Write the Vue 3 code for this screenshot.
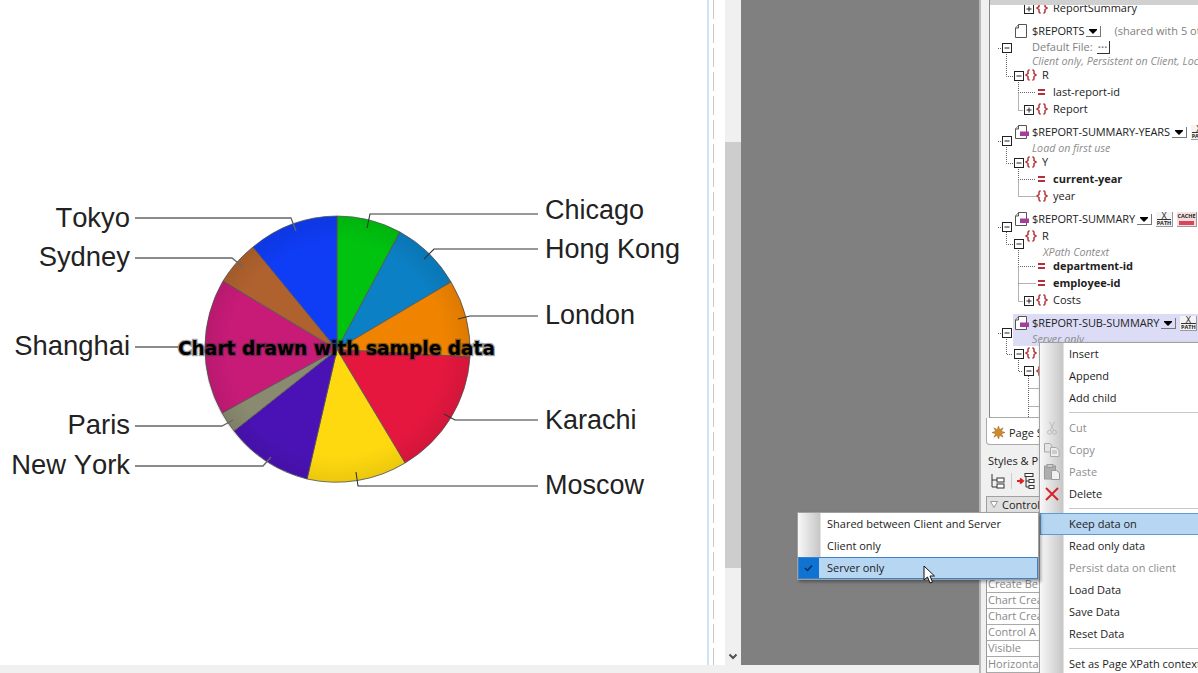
<script setup>
const slices = [
  { d: 'M337 349.5 L337 216 A133 133 0 0 1 400 232 Z', fill: '#00c30f' },
  { d: 'M337 349.5 L400 232 A133 133 0 0 1 451 282 Z', fill: '#0b80c4' },
  { d: 'M337 349.5 L451 282 A133 133 0 0 1 470 357 Z', fill: '#f08400' },
  { d: 'M337 349.5 L470 357 A133 133 0 0 1 405 463 Z', fill: '#e5173f' },
  { d: 'M337 349.5 L405 463 A133 133 0 0 1 307 479 Z', fill: '#ffd90f' },
  { d: 'M337 349.5 L307 479 A133 133 0 0 1 234 431 Z', fill: '#4a12b5' },
  { d: 'M337 349.5 L234 431 A133 133 0 0 1 222 413 Z', fill: '#8a8a70' },
  { d: 'M337 349.5 L222 413 A133 133 0 0 1 223 281 Z', fill: '#c81b78' },
  { d: 'M337 349.5 L223 281 A133 133 0 0 1 253 247 Z', fill: '#b0622e' },
  { d: 'M337 349.5 L253 247 A133 133 0 0 1 337 216 Z', fill: '#0f3cf5' },
]

const leftLabels = [
  { text: 'Tokyo', y: 227, line: '135,218 291,218 296,231' },
  { text: 'Sydney', y: 266, line: '135,258 232,258 243,267' },
  { text: 'Shanghai', y: 355, line: '135,347 178,347' },
  { text: 'Paris', y: 434, line: '135,426 222,426 233,420' },
  { text: 'New York', y: 474, line: '135,466 263,466 271,457' },
]

const rightLabels = [
  { text: 'Chicago', y: 219, line: '538,214 370,214 367,228' },
  { text: 'Hong Kong', y: 258, line: '538,249 434,249 424,259' },
  { text: 'London', y: 324, line: '538,316 470,316 458,319' },
  { text: 'Karachi', y: 429, line: '538,420 455,420 444,414' },
  { text: 'Moscow', y: 494, line: '538,486 358,486 356,472' },
]

// y is the row's centre line, x its text start; both from the tree box corner
const rowHeight = 14
const treeData = [
  { y: 8, x: 63, text: 'ReportSummary', icon: 'brace' },
  { y: 31, x: 42, text: '$REPORTS', icon: 'file', drop: true, note: '(shared with 5 ot' },
  { y: 47, x: 42, text: 'Default File:', kind: 'gray', dots: true },
  { y: 61, x: 42, text: 'Client only, Persistent on Client, Loc', kind: 'hint' },
  { y: 75, x: 52, text: 'R', icon: 'brace' },
  { y: 92, x: 63, text: 'last-report-id', icon: 'eq' },
  { y: 109, x: 63, text: 'Report', icon: 'brace' },
  { y: 132, x: 42, text: '$REPORT-SUMMARY-YEARS', icon: 'data', drop: true, badges: ['X'] },
  { y: 148, x: 42, text: 'Load on first use', kind: 'hint' },
  { y: 162, x: 52, text: 'Y', icon: 'brace' },
  { y: 179, x: 63, text: 'current-year', icon: 'eq', kind: 'bold' },
  { y: 196, x: 63, text: 'year', icon: 'brace' },
  { y: 219, x: 42, text: '$REPORT-SUMMARY', icon: 'data', drop: true, badges: ['X', 'C'] },
  { y: 236, x: 52, text: 'R', icon: 'brace' },
  { y: 252, x: 53, text: 'XPath Context', kind: 'hint' },
  { y: 266, x: 63, text: 'department-id', icon: 'eq', kind: 'bold' },
  { y: 283, x: 63, text: 'employee-id', icon: 'eq', kind: 'bold' },
  { y: 300, x: 63, text: 'Costs', icon: 'brace' },
  { y: 323, x: 42, text: '$REPORT-SUB-SUMMARY', icon: 'data', drop: true, badges: ['X'] },
  { y: 339, x: 42, text: 'Server only', kind: 'hint' },
  { y: 353, x: 52, text: '', icon: 'brace' },
  { y: 371, x: 63, text: '', icon: 'brace' },
]
const treeRows = treeData.map((row, i) => ({
  ...row,
  gap: i === 0 ? row.y - rowHeight / 2 : row.y - treeData[i - 1].y - rowHeight,
}))

const expanders = [
  { x: 38.5, y: 9, plus: true }, { x: 16.5, y: 48 }, { x: 28, y: 76 }, { x: 38.5, y: 110, plus: true },
  { x: 16.5, y: 141 }, { x: 28, y: 163 }, { x: 16.5, y: 227 }, { x: 28, y: 244 },
  { x: 38.5, y: 301, plus: true }, { x: 16.5, y: 333 }, { x: 28, y: 354 }, { x: 38.5, y: 371 },
]

const treeLines = [
  'M16.5 52 V76.5 H23', 'M28.5 80 V92.5 H46 M28.5 92.5 V110.5 H33', 'M11 48.5 H8',
  'M16.5 145 V163.5 H23', 'M28.5 167 V179.5 H46 M28.5 179.5 V196.5 H46', 'M11 141.5 H8',
  'M16.5 232 V244.5 H23', 'M28.5 248 V266.5 H46 M28.5 266.5 V283.5 H46 M28.5 283.5 V301.5 H33', 'M11 227.5 H8',
  'M11 333.5 H8', 'M16.5 337 V354.5 H23', 'M28.5 358 V371.5 H33', 'M38.5 376 V418', 'M38.5 388.5 H50 M38.5 406.5 H50',
]

const menuItems = [
  { label: 'Insert' }, { label: 'Append' }, { label: 'Add child' }, { sep: true },
  { label: 'Cut', off: true, icon: 'cut' }, { label: 'Copy', off: true, icon: 'copy' },
  { label: 'Paste', off: true, icon: 'paste' }, { label: 'Delete', icon: 'delete' }, { sep: true },
  { label: 'Keep data on', on: true }, { label: 'Read only data' },
  { label: 'Persist data on client', off: true }, { label: 'Load Data' },
  { label: 'Save Data' }, { label: 'Reset Data' }, { sep: true },
  { label: 'Set as Page XPath context' },
]

const subItems = [
  { label: 'Shared between Client and Server' },
  { label: 'Client only' },
  { label: 'Server only', on: true },
]

const propRows = ['Create Be', 'Chart Crea', 'Chart Crea', 'Control A', 'Visible', 'Horizonta']
</script>

<template>
  <div class="screen">
    <div class="main">
      <section class="design">
        <svg class="chart" width="707" height="665" viewBox="0 0 707 665">
          <defs>
            <radialGradient id="shade" gradientUnits="userSpaceOnUse" cx="337" cy="349.5" r="133">
              <stop offset="0.8" stop-color="#000" stop-opacity="0" />
              <stop offset="1" stop-color="#000" stop-opacity="0.08" />
            </radialGradient>
          </defs>
          <path v-for="s in slices" :key="s.fill" :d="s.d" :fill="s.fill" stroke="#555" stroke-width="0.8" />
          <circle cx="337" cy="349.5" r="133" fill="url(#shade)" />
          <g v-for="l in leftLabels" :key="l.text">
            <polyline :points="l.line" fill="none" stroke="#666" stroke-width="1.3" />
            <text class="city left" x="130" :y="l.y" text-anchor="end">{{ l.text }}</text>
          </g>
          <g v-for="l in rightLabels" :key="l.text">
            <polyline :points="l.line" fill="none" stroke="#333" stroke-width="1.1" />
            <text class="city" x="545" :y="l.y">{{ l.text }}</text>
          </g>
          <text class="chart-note" x="336.5" y="355" text-anchor="middle">Chart drawn with sample data</text>
        </svg>
        <div class="page-edge"></div>
      </section>

      <div class="scrollbar">
        <div class="scroll-thumb"></div>
        <svg class="scroll-arrow" width="10" height="8" viewBox="0 0 10 8">
          <path d="M1.5 1.5 L5 5 L8.5 1.5" fill="none" stroke="#505050" stroke-width="2" />
        </svg>
      </div>

      <div class="workspace"></div>
    </div>

    <aside class="panel">
      <div class="tree">
        <div class="tree-selection"></div>
        <svg class="tree-lines" width="210" height="418" viewBox="0 0 210 418">
          <path v-for="l in treeLines" :key="l" :d="l" fill="none" stroke="#666" stroke-dasharray="1 1" />
        </svg>
        <div
          v-for="(row, i) in treeRows"
          :key="i"
          class="row"
          :class="row.kind"
          :style="{ marginTop: row.gap + 'px', paddingLeft: row.x + 'px' }"
        >
          <span v-if="row.icon" class="row-icon" :style="{ left: row.x - 17 + 'px' }">
            <svg v-if="row.icon === 'brace'" width="12" height="13" viewBox="0 0 12 13">
              <path d="M4.5 1 L3 2.5 V5 L1 6.5 L3 8 V10.5 L4.5 12 M7.5 1 L9 2.5 V5 L11 6.5 L9 8 V10.5 L7.5 12" fill="none" stroke="#b5373a" stroke-width="1.5" />
            </svg>
            <svg v-else-if="row.icon === 'eq'" class="eq" width="9" height="9" viewBox="0 0 9 9">
              <path d="M1 2.5 H8 M1 6.5 H8" stroke="#b92d3a" stroke-width="2" />
            </svg>
            <svg v-else width="14" height="14" viewBox="0 0 14 14">
              <path d="M3.5 .5 H11.5 V13.5 H.5 V4 Z" fill="#fff" stroke="#555" />
              <path d="M3.5 .5 V4 H.5" fill="#ddd" stroke="#555" />
              <rect v-if="row.icon === 'data'" x="5" y="6.5" width="9" height="4.5" fill="#a63c9c" />
            </svg>
          </span>
          <span class="row-text" :class="{ caps: row.drop }">{{ row.text }}</span>
          <span v-if="row.drop" class="drop"></span>
          <span v-if="row.note" class="note">{{ row.note }}</span>
          <span v-if="row.dots" class="dots">...</span>
          <template v-for="b in row.badges" :key="b">
            <span v-if="b === 'X'" class="badge"><b>X</b><i>PATH</i></span>
            <span v-else class="badge cache"><i>CACHE</i><u></u></span>
          </template>
        </div>
        <svg class="expanders" width="210" height="418" viewBox="0 0 210 418">
          <g v-for="e in expanders" :key="e.x + '-' + e.y" :transform="`translate(${Math.floor(e.x) - 4 + 0.5} ${e.y - 5 + 0.5})`">
            <rect x="0" y="0" width="9" height="9" fill="#fff" stroke="#222" />
            <path d="M2 4.5 H7" stroke="#222" />
            <path v-if="e.plus" d="M4.5 2 V7" stroke="#222" />
          </g>
        </svg>
        <div class="tree-top"></div>
      </div>

      <div class="tab">
        <svg width="13" height="13" viewBox="0 0 14 14">
          <path d="M7 0 L8.3 4 L12 2 L10 5.7 L14 7 L10 8.3 L12 12 L8.3 10 L7 14 L5.7 10 L2 12 L4 8.3 L0 7 L4 5.7 L2 2 L5.7 4 Z" fill="#d08a2a" stroke="#8a5a18" stroke-width="0.5" />
        </svg>
        <span>Page S</span>
      </div>
      <div class="styles-title">Styles &amp; P</div>
      <div class="toolbar">
        <svg width="16" height="16" viewBox="0 0 16 16">
          <path d="M2 1 V14 H7 M2 7 H7" fill="none" stroke="#333" />
          <rect x="7" y="5" width="7" height="4" fill="#fff" stroke="#333" />
          <rect x="7" y="11" width="7" height="4" fill="#fff" stroke="#333" />
        </svg>
        <i class="tool-sep"></i>
        <svg width="18" height="16" viewBox="0 0 18 16">
          <path d="M0 8 H5 M3 5.5 L6 8 L3 10.5" fill="none" stroke="#d22" stroke-width="2" />
          <path d="M9 2 V14 M9 8 H12 M9 14 H12" fill="none" stroke="#333" />
          <rect x="8" y="0.5" width="8" height="3" fill="#fff" stroke="#333" />
          <rect x="12" y="6.5" width="5" height="3" fill="#fff" stroke="#333" />
          <rect x="12" y="12.5" width="5" height="3" fill="#fff" stroke="#333" />
        </svg>
      </div>
      <div class="group-head">
        <svg width="8" height="7" viewBox="0 0 8 7">
          <path d="M.5 .5 H7.5 L4 6.5 Z" fill="#fff" stroke="#999" />
        </svg>
        <span>Control</span>
      </div>
      <div class="props">
        <div v-for="(p, i) in propRows" :key="i" class="prop">{{ p }}</div>
      </div>
    </aside>

    <div class="menu">
      <template v-for="(item, i) in menuItems" :key="i">
        <div v-if="item.sep" class="menu-sep"></div>
        <div v-else class="menu-item" :class="{ off: item.off, on: item.on }">
          <span class="menu-gutter">
            <svg v-if="item.icon === 'cut'" width="10" height="15" viewBox="0 0 12 16">
              <path d="M3 0 L8 10 M9 0 L4 10" stroke="#b4b4b4" fill="none" />
              <circle cx="3" cy="12.5" r="2.4" fill="none" stroke="#b4b4b4" />
              <circle cx="9" cy="12.5" r="2.4" fill="none" stroke="#b4b4b4" />
            </svg>
            <svg v-else-if="item.icon === 'copy'" width="16" height="14" viewBox="0 0 16 14">
              <path d="M.5 .5 H6 L8 3 V9 H.5 Z" fill="#e4e4e4" stroke="#aaa" />
              <path d="M6.5 4.5 H12 L15 7 V13.5 H6.5 Z" fill="#eee" stroke="#aaa" />
              <path d="M8 8 H13 M8 10 H13" stroke="#aaa" />
            </svg>
            <svg v-else-if="item.icon === 'paste'" width="16" height="16" viewBox="0 0 16 16">
              <rect x=".5" y="2" width="11" height="13" fill="#aeaeae" stroke="#999" />
              <rect x="3" y=".5" width="6" height="3" fill="#ccc" stroke="#999" />
              <path d="M7.5 6.5 H12.5 L15.5 9 V15.5 H7.5 Z" fill="#f0f0f0" stroke="#999" />
            </svg>
            <svg v-else-if="item.icon === 'delete'" width="14" height="14" viewBox="0 0 14 14">
              <path d="M1 1 L13 13 M13 1 L1 13" stroke="#d8242c" stroke-width="2" />
            </svg>
          </span>
          <span class="menu-label">{{ item.label }}</span>
        </div>
      </template>
    </div>

    <div class="submenu">
      <div v-for="item in subItems" :key="item.label" class="sub-item" :class="{ on: item.on }">
        <span class="sub-gutter">
          <svg v-if="item.on" width="9" height="8" viewBox="0 0 9 8">
            <path d="M1 4 L3.5 6.5 L8 1.5" fill="none" stroke="#0b2a55" stroke-width="1.5" />
          </svg>
        </span>
        <span class="menu-label">{{ item.label }}</span>
      </div>
    </div>

    <svg class="cursor" width="14" height="20" viewBox="0 0 14 20">
      <path d="M1 1 V15 L4.5 12 L7 18 L9.5 17 L7 11 H11.5 Z" fill="#fff" stroke="#111" />
    </svg>
  </div>
</template>

<style scoped>
.screen {
  position: relative;
  width: 1198px;
  height: 673px;
  overflow: hidden;
  display: flex;
  background: #f0f0f0;
  font-family: "Open Sans", "Noto Sans", sans-serif;
  font-size: 11px;
  color: #222;
}

.main {
  display: flex;
  width: 979px;
  height: 665px;
  flex: none;
}

.design {
  position: relative;
  width: 725px;
  background: #fff;
  flex: none;
}

.chart {
  display: block;
}

.city {
  font-family: "Liberation Sans", Arial, sans-serif;
  font-size: 27px;
  font-kerning: none;
  fill: #222;
}

.city.left {
  font-size: 27.4px;
}

.chart-note {
  font-family: "DejaVu Sans", sans-serif;
  font-size: 18.6px;
  font-weight: 700;
  fill: #000;
  paint-order: stroke;
  stroke: rgba(40, 40, 40, 0.45);
  stroke-width: 2.5px;
}

.page-edge {
  position: absolute;
  left: 707px;
  top: 0;
  bottom: 0;
  width: 5px;
  border-left: 2px solid #cfe2f6;
  background: repeating-linear-gradient(to bottom, #c8c8c8 0 19px, #fff 19px 24px) no-repeat right / 1px 100%;
}

.scrollbar {
  position: relative;
  width: 16px;
  flex: none;
  background: #f0f0f0;
  padding-top: 142px;
}

.scroll-thumb {
  height: 426px;
  background: #cdcdcd;
}

.scroll-arrow {
  position: absolute;
  left: 3px;
  bottom: 4px;
}

.workspace {
  flex: 1;
  background: #808080;
}

.panel {
  flex: 1;
  min-width: 0;
  padding-left: 5px;
  border-left: 2px solid #b8b8b8;
  overflow: hidden;
  background: #f0f0f0;
}

.tree {
  position: relative;
  width: 210px;
  height: 417px;
  margin-left: 3px;
  background: #fff;
  border-left: 1px solid #888;
  border-bottom: 1px solid #aaa;
  overflow: hidden;
}

.tree-top {
  position: absolute;
  left: -1px;
  right: 0;
  top: 0;
  height: 5px;
  background: #d0d0d0;
}

.tree-selection {
  position: absolute;
  left: 23px;
  right: 0;
  top: 314px;
  height: 32px;
  background: #dcdcf6;
}

.tree-lines,
.expanders {
  position: absolute;
  left: 0;
  top: 0;
  pointer-events: none;
}

.row {
  position: relative;
  display: flex;
  align-items: center;
  height: 14px;
  white-space: nowrap;
  line-height: 14px;
}

.row.gray {
  color: #808080;
}

.row.hint {
  color: #8c8c8c;
  font-style: italic;
  font-size: 10.7px;
}

.row.bold {
  font-weight: 700;
}

.row-icon {
  position: absolute;
  top: 50%;
  transform: translateY(-50%);
  display: flex;
}

.row-icon .eq {
  margin-left: 1px;
}

.row-text.caps {
  letter-spacing: -0.1px;
}

.drop {
  width: 14px;
  height: 10px;
  margin-left: 2px;
  border-right: 1px solid #777;
  border-bottom: 1px solid #777;
  background: linear-gradient(#000, #000) center 3px / 8px 1px no-repeat;
  flex: none;
  position: relative;
}

.drop::after {
  content: "";
  position: absolute;
  left: 3px;
  top: 4px;
  border: 4px solid transparent;
  border-top-color: #000;
}

.note {
  margin-left: 13px;
  color: #808080;
}

.dots {
  margin-left: 4px;
  width: 12px;
  height: 12px;
  line-height: 6px;
  font-weight: 700;
  border-right: 1px solid #333;
  border-bottom: 1px solid #333;
  text-align: center;
}

.badge {
  margin-left: 4px;
  width: 16px;
  height: 14px;
  flex: none;
  background: #f4f4f4;
  border-right: 1px solid #999;
  border-bottom: 1px solid #999;
  display: flex;
  flex-direction: column;
  align-items: center;
  font-size: 8px;
  line-height: 7px;
}

.badge b {
  font-weight: 400;
  font-size: 9px;
  line-height: 7px;
}

.badge i {
  font-style: normal;
  font-size: 5.5px;
  font-weight: 700;
  line-height: 6px;
  border-top: 1px solid #333;
}

.badge.cache {
  width: 19px;
  background: #f5dede;
}

.badge.cache i {
  border: 0;
  margin-top: 1px;
}

.badge.cache u {
  width: 15px;
  height: 4px;
  margin-top: 2px;
  background: #d9455a;
}

.tab {
  display: flex;
  align-items: center;
  gap: 4px;
  width: 70px;
  height: 27px;
  box-sizing: border-box;
  padding: 3px 0 0 5px;
  background: #fff;
  border: 1px solid #aaa;
  border-top: 0;
  border-radius: 0 0 0 4px;
  white-space: nowrap;
}

.tab svg {
  flex: none;
}

.styles-title {
  margin-top: 9px;
  padding-left: 2px;
  height: 15px;
  line-height: 14px;
  white-space: nowrap;
}

.toolbar {
  display: flex;
  align-items: center;
  gap: 5px;
  height: 24px;
  padding-left: 4px;
}

.tool-sep {
  width: 1px;
  height: 16px;
  background: #ccc;
}

.group-head {
  height: 15px;
  line-height: 14px;
  width: 200px;
  margin-top: 3px;
  background: #e0e0e0;
  border: 1px solid #a0a0a0;
  display: flex;
  align-items: center;
  gap: 4px;
  padding-left: 3px;
}

.props {
  margin-top: 64px;
  width: 200px;
  background: #fff;
  border-left: 1px solid #999;
}

.prop {
  box-sizing: border-box;
  height: 16px;
  line-height: 14px;
  padding-left: 1px;
  color: #8a8a8a;
  border-bottom: 1px solid #aaa;
  white-space: nowrap;
}

.menu {
  position: absolute;
  left: 1039px;
  top: 342px;
  width: 190px;
  background: #fff;
  border: 1px solid #a0a0a0;
  box-shadow: 2px 2px 4px rgba(0, 0, 0, 0.3);
  background-image: linear-gradient(to right, #f8f8f8, #c6c6c6 23px, #fff 24px);
  background-repeat: no-repeat;
  background-size: 24px 100%;
}

.menu-item {
  display: flex;
  align-items: center;
  height: 22px;
  white-space: nowrap;
  color: #1c1c1c;
}

.menu-item.off {
  color: #8d8d8d;
}

.menu-item.on {
  background: #b6d6f2;
  outline: 1px solid #5b9bd5;
  outline-offset: -1px;
}

.menu-label {
  margin-top: -2px;
}

.menu-gutter {
  width: 24px;
  margin-right: 5px;
  height: 22px;
  flex: none;
  display: flex;
  align-items: center;
  justify-content: center;
}

.menu-sep {
  height: 1px;
  margin: 3px 0 4px 29px;
  background: #c8c8c8;
}

.submenu {
  position: absolute;
  left: 797px;
  top: 512px;
  width: 240px;
  background: #fff;
  border: 1px solid #a0a0a0;
  box-shadow: 2px 2px 3px rgba(0, 0, 0, 0.35);
  background-image: linear-gradient(to right, #f8f8f8, #c6c6c6 22px, #fff 23px);
  background-repeat: no-repeat;
  background-size: 23px 100%;
}

.sub-item {
  display: flex;
  align-items: center;
  height: 22px;
  white-space: nowrap;
  color: #1c1c1c;
}

.sub-item.on {
  background: #b6d6f2;
  outline: 1px solid #3c82c8;
  outline-offset: -1px;
}

.sub-gutter {
  width: 29px;
  height: 22px;
  flex: none;
  display: flex;
  align-items: center;
  justify-content: center;
  padding-right: 8px;
  box-sizing: border-box;
}

.sub-item.on .sub-gutter {
  background: linear-gradient(#0f73d2, #0f73d2) left / 21px 100% no-repeat;
}

.cursor {
  position: absolute;
  left: 923px;
  top: 565px;
}
</style>

<style>
html,
body {
  margin: 0;
  background: #f0f0f0;
}
</style>
